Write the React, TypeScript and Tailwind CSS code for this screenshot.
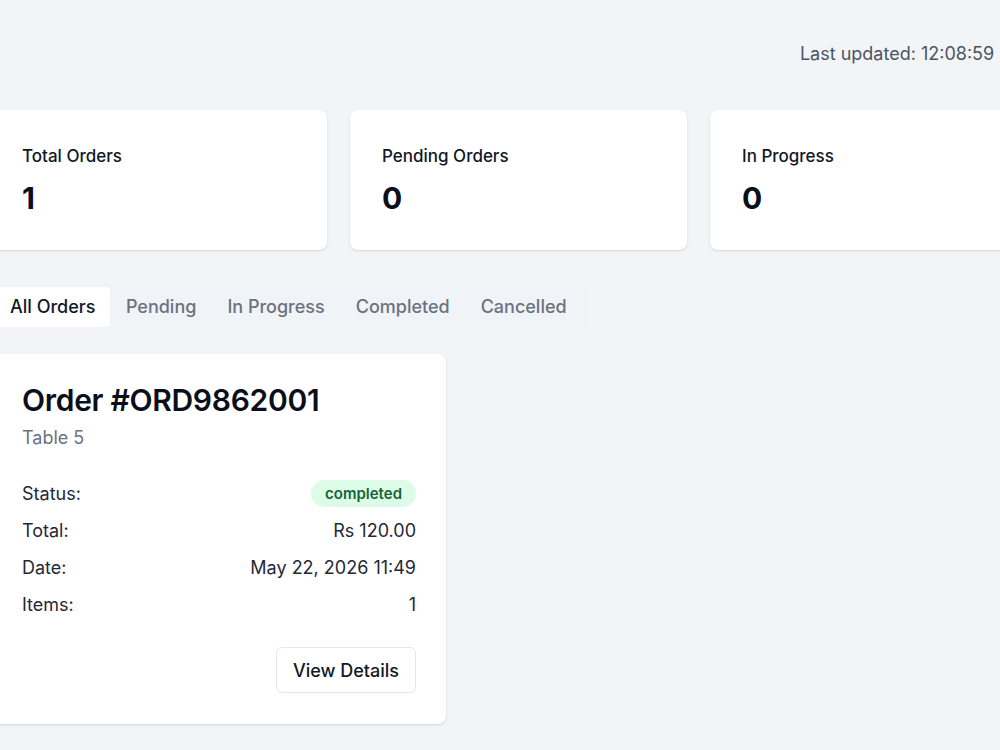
import React from "react";

function StatCard({ label, value }: { label: string; value: string }) {
  return (
    <div className="w-[337px] shrink-0 rounded-lg bg-white px-8 pt-[34px] pb-[34px] shadow-sm">
      <div className="text-[17px] font-medium leading-6 text-[#111827]">{label}</div>
      <div className="mt-3 text-[30px] font-bold leading-9 text-[#0b0f1a]">{value}</div>
    </div>
  );
}

function Row({ label, children }: { label: string; children: React.ReactNode }) {
  return (
    <div className="flex h-[27px] items-center justify-between text-[18px] leading-[27px] text-[#1f2937]">
      <span>{label}</span>
      {children}
    </div>
  );
}

export default function App() {
  return (
    <div
      className="h-[750px] w-[1000px] overflow-hidden bg-[#f3f4f6]"
      style={{ fontFamily: "Inter, 'Noto Sans', sans-serif" }}
    >
      <div className="ml-[-10px] w-[1057px]">
        <div className="flex justify-end pt-[40px] pr-[20px]">
          <span className="whitespace-nowrap text-[18px] leading-[27px] text-[#4b5563]">
            Last updated: 12:08:59 PM
          </span>
        </div>
        <div className="mt-[43px] flex gap-[23px]">
          <StatCard label="Total Orders" value="1" />
          <StatCard label="Pending Orders" value="0" />
          <StatCard label="In Progress" value="0" />
        </div>
        <div className="mt-[33px] flex">
          <div className="flex items-center rounded-md bg-[#f0f3f7] p-1">
            <div className="rounded-[4px] bg-white py-2 pl-4 pr-[15px] text-[18px] font-medium leading-6 text-[#111827]">
              All Orders
            </div>
            <div className="px-[15.5px] py-2 text-[18px] font-medium leading-6 text-[#6b7280]">Pending</div>
            <div className="px-[15.5px] py-2 text-[18px] font-medium leading-6 text-[#6b7280]">In Progress</div>
            <div className="px-[15.5px] py-2 text-[18px] font-medium leading-6 text-[#6b7280]">Completed</div>
            <div className="px-[15.5px] py-2 text-[18px] font-medium leading-6 text-[#6b7280]">Cancelled</div>
          </div>
        </div>
        <div className="mt-[23px] w-[456px] rounded-lg bg-white pt-[28px] pb-[31px] pl-8 pr-[30px] shadow-sm">
          <div className="text-[30px] font-semibold leading-9 tracking-[-0.01em] text-[#0b0f1a]">
            Order #ORD9862001
          </div>
          <div className="mt-[6px] text-[18px] leading-[27px] text-[#6b7280]">Table 5</div>
          <div className="mt-[29px] flex flex-col gap-[10px]">
            <Row label="Status:">
              <span className="rounded-full bg-[#dcfce7] px-[14px] py-[3px] text-[15px] font-semibold leading-[21px] text-[#166534]">
                completed
              </span>
            </Row>
            <Row label="Total:">
              <span>Rs 120.00</span>
            </Row>
            <Row label="Date:">
              <span>May 22, 2026 11:49</span>
            </Row>
            <Row label="Items:">
              <span>1</span>
            </Row>
          </div>
          <div className="mt-[29px] flex justify-end">
            <button className="h-[46px] rounded-md border border-[#e5e7eb] bg-white px-4 text-[18px] font-medium text-[#111827]">
              View Details
            </button>
          </div>
        </div>
      </div>
    </div>
  );
}
